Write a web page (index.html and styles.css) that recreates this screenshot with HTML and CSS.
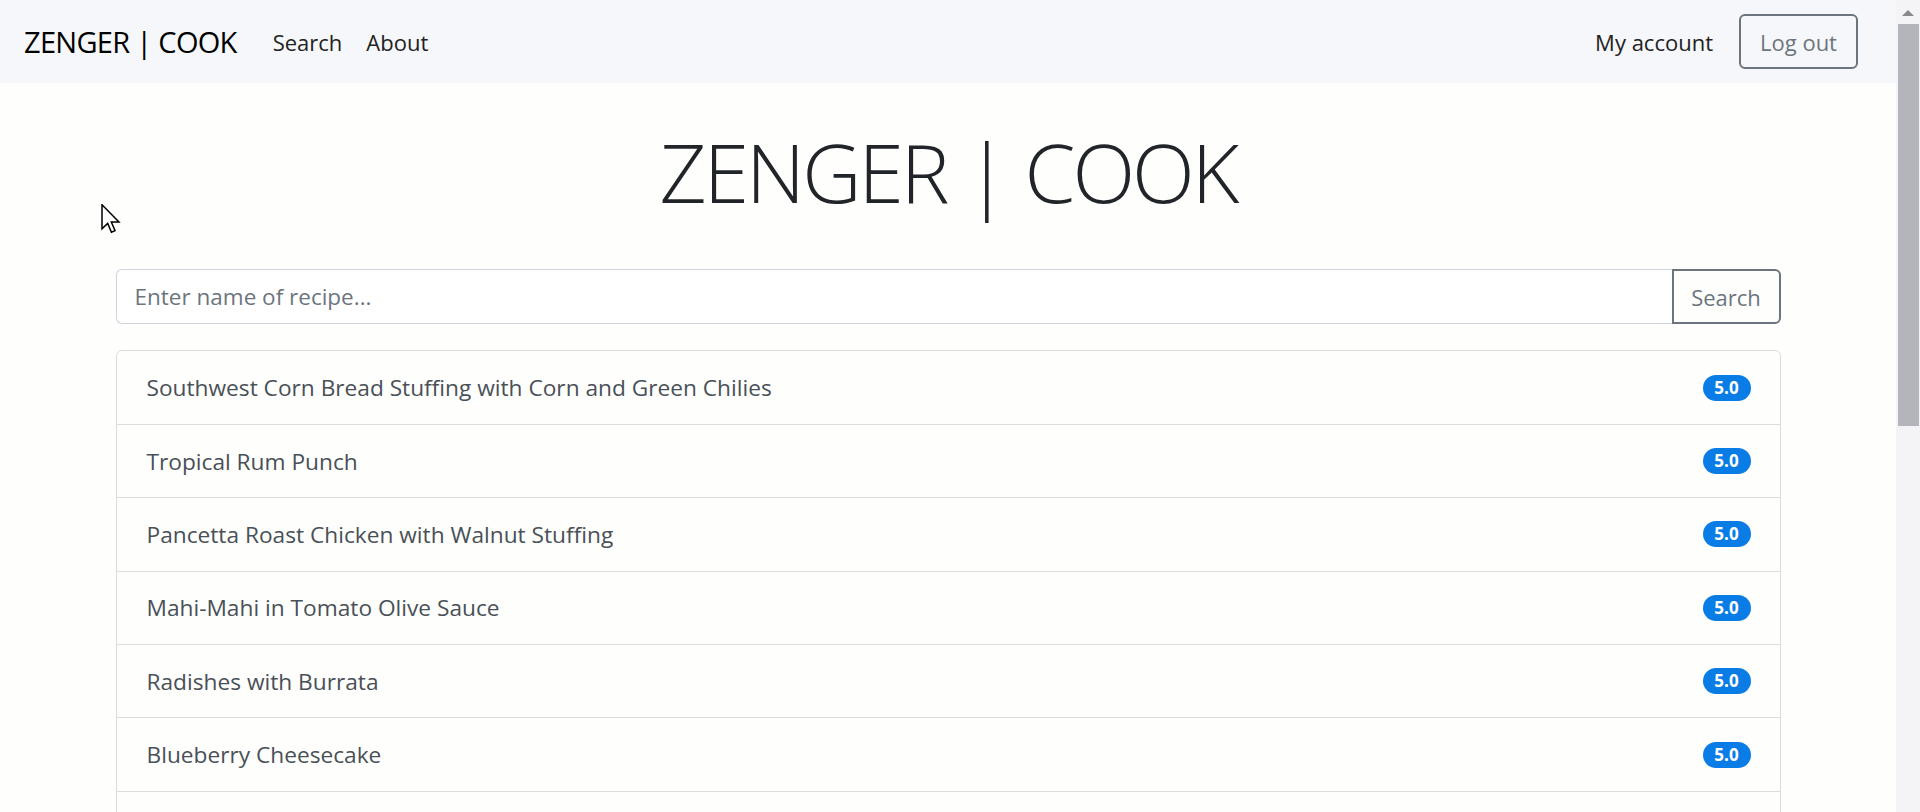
FILE: index.html
```html
<!DOCTYPE html>
<html lang="en">
<head>
<meta charset="utf-8">
<title>ZENGER | COOK</title>
<link rel="stylesheet" href="styles.css">
</head>
<body>
<div class="viewport">
  <div class="page">
    <nav class="navbar">
      <a class="brand" href="#">ZENGER | COOK</a>
      <ul class="nav">
        <li><a class="nav-link" href="#">Search</a></li>
        <li><a class="nav-link" href="#">About</a></li>
      </ul>
      <ul class="nav nav-right">
        <li><a class="nav-link" href="#">My account</a></li>
        <li><button class="btn btn-outline logout">Log out</button></li>
      </ul>
    </nav>
    <main class="container">
      <h1 class="display">ZENGER | COOK</h1>
      <form class="input-group">
        <input class="form-control" type="text" placeholder="Enter name of recipe...">
        <button class="btn btn-outline search-btn" type="button">Search</button>
      </form>
      <ul class="list-group">
        <li class="list-item"><span>Southwest Corn Bread Stuffing with Corn and Green Chilies</span><span class="badge">5.0</span></li>
        <li class="list-item"><span>Tropical Rum Punch</span><span class="badge">5.0</span></li>
        <li class="list-item"><span>Pancetta Roast Chicken with Walnut Stuffing</span><span class="badge">5.0</span></li>
        <li class="list-item"><span>Mahi-Mahi in Tomato Olive Sauce</span><span class="badge">5.0</span></li>
        <li class="list-item"><span>Radishes with Burrata</span><span class="badge">5.0</span></li>
        <li class="list-item"><span>Blueberry Cheesecake</span><span class="badge">5.0</span></li>
        <li class="list-item"></li>
      </ul>
    </main>
    <svg class="cursor" width="20" height="30" viewBox="0 0 13 20" aria-hidden="true">
      <path d="M0.5 0.5 L0.5 16.5 L4.3 12.9 L6.8 18.8 L9.2 17.8 L6.7 12 L11.8 12 Z" fill="#fff" stroke="#000" stroke-width="1" stroke-linejoin="miter"/>
    </svg>
  </div>
  <div class="scrollbar">
    <div class="scroll-arrow"></div>
    <div class="scroll-thumb"></div>
  </div>
</div>
</body>
</html>
```
FILE: styles.css
```css
* { box-sizing: border-box; }
html, body { margin: 0; padding: 0; height: 812px; overflow: hidden; }
body {
  font-family: "Open Sans", "Noto Sans", sans-serif;
  color: #212529;
  background: #fefefd;
}
.viewport { display: flex; height: 812px; }
.page { flex: 1; position: relative; overflow: hidden; }
.scrollbar {
  width: 24px;
  background: #f4f4f6;
  display: flex;
  flex-direction: column;
  align-items: center;
}
.scroll-arrow {
  width: 0; height: 0;
  margin-top: 10px;
  border-left: 6px solid transparent;
  border-right: 6px solid transparent;
  border-bottom: 6px solid #8a8a8a;
}
.scroll-thumb {
  width: 21px;
  margin-top: 8px;
  height: 402px;
  background: #b4b4bc;
}

.navbar {
  display: flex;
  align-items: center;
  height: 83px;
  padding: 0 38px 0 24px;
  background: #f6f7fa;
}
.brand {
  font-size: 29px;
  line-height: 45px;
  color: #000;
  text-decoration: none;
  margin-right: 24px;
  letter-spacing: -0.7px;
}
.nav { display: flex; align-items: center; list-style: none; margin: 0; padding: 0; }
.nav-right { margin-left: auto; }
.nav-link {
  display: block;
  padding: 0 12px;
  font-size: 22px;
  line-height: 36px;
  color: #222;
  text-decoration: none;
}
.btn {
  font-family: inherit;
  background: transparent;
  border: 2px solid #6c757d;
  color: #6c757d;
  font-size: 22px;
  border-radius: 6px;
  cursor: pointer;
}
.logout {
  height: 55px;
  width: 119px;
  margin-left: 14px;
  padding: 0;
}

.container {
  max-width: 1710px;
  margin: 0 auto;
  padding: 0 22.5px;
}
.display {
  margin: 39px 0 49px;
  text-align: center;
  font-size: 82px;
  font-weight: 300;
  line-height: 1.2;
  color: #212529;
  letter-spacing: -3px;
}
.input-group { display: flex; height: 55px; margin: 0 0 26px; }
.form-control {
  flex: 1;
  min-width: 0;
  border: 1px solid #ced4da;
  border-right: none;
  border-radius: 6px 0 0 6px;
  padding: 0 18px;
  font-family: inherit;
  font-size: 22.5px;
  color: #495057;
  background: #fff;
  outline: none;
}
.form-control::placeholder { color: #6c757d; }
.search-btn {
  width: 109px;
  padding: 0;
  border-radius: 0 6px 6px 0;
}

.list-group {
  list-style: none;
  margin: 0;
  padding: 0;
  border: 1px solid #dcdcdc;
  border-radius: 6px;
}
.list-item {
  display: flex;
  align-items: center;
  justify-content: space-between;
  height: 73.4px;
  padding: 0 29px 0 30px;
  font-size: 22.7px;
  color: #495057;
  border-top: 1px solid #dcdcdc;
}
.list-item:first-child { border-top: none; height: 72.5px; }
.badge {
  display: inline-block;
  background: #0a7ce6;
  color: #fff;
  font-weight: 700;
  font-size: 17px;
  line-height: 26px;
  height: 26px;
  width: 48px;
  text-align: center;
  border-radius: 13px;
}
.cursor { position: absolute; left: 101px; top: 204px; }
```
